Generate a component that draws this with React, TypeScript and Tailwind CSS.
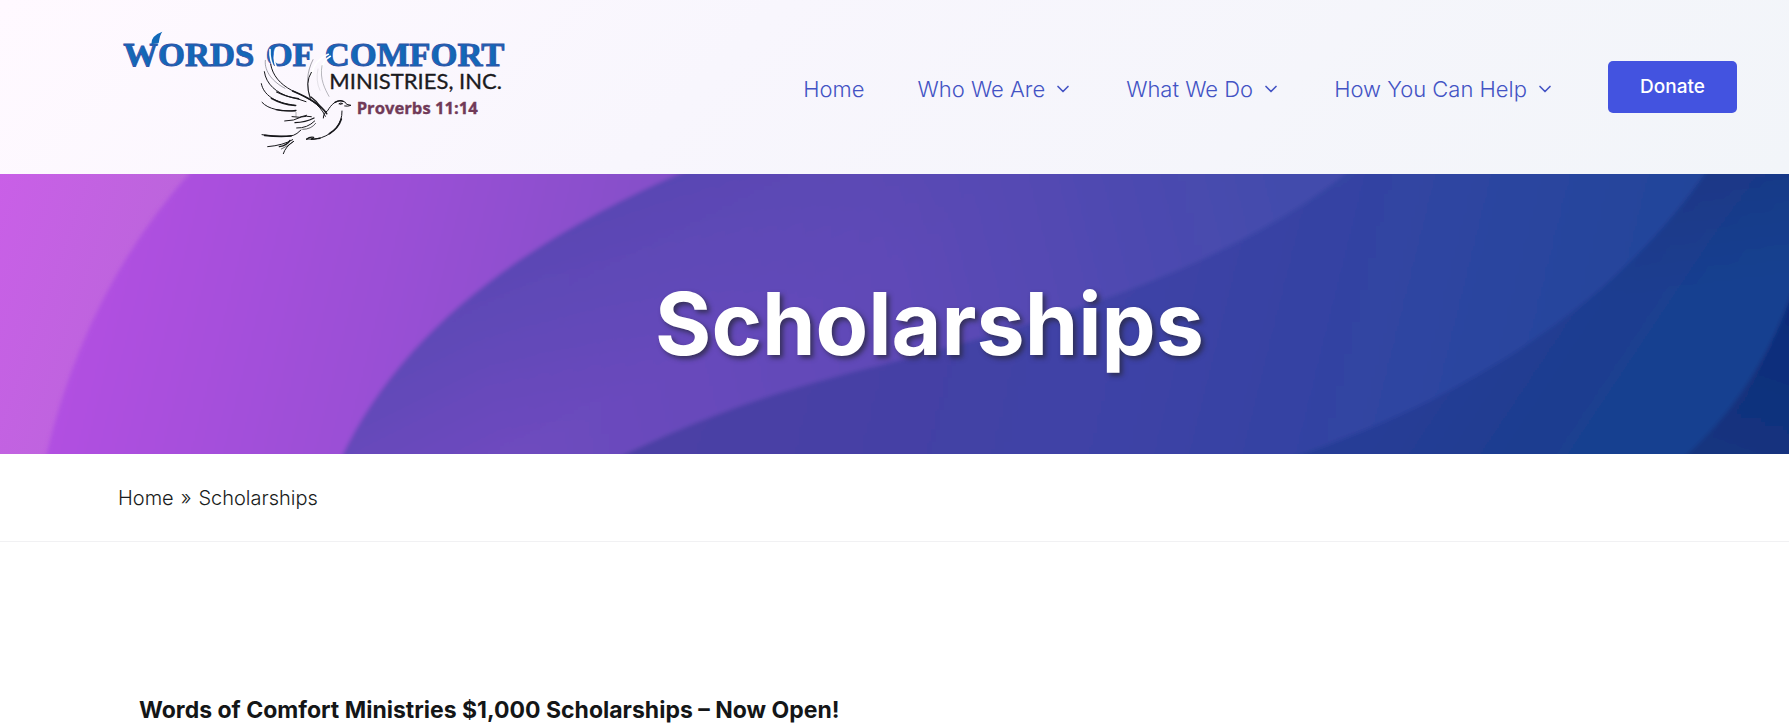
import { ChevronDown } from "lucide-react";

function Logo() {
  return (
    <svg viewBox="0 0 1230 435" className="h-[145px] w-[410px]" role="img" aria-label="Words of Comfort Ministries, Inc.">
      <g
        fontFamily="Liberation Serif, serif"
        fontWeight="700"
        fontSize="104"
        fill="#1169b8"
        stroke="#3154a8"
        strokeWidth="3"
      >
        <text x="40" y="140">WORDS</text>
        <text x="467" y="140">OF</text>
        <text x="644" y="140">COMFORT</text>
      </g>
      <path d="M124 76 Q122 50 157 38 Q150 46 146 72Z" fill="#1169b8" />
      <text x="658" y="209" fontFamily="Lato, sans-serif" fontSize="66" fill="#1b1b1f" stroke="#1b1b1f" strokeWidth="1">MINISTRIES, INC.</text>
      <text x="740" y="284" fontFamily="Open Sans, sans-serif" fontWeight="700" fontSize="50" fill="#713a58" stroke="#713a58" strokeWidth="1">Proverbs 11:14</text>
      <g fill="none" stroke="#fff" strokeLinecap="round" strokeWidth="5">
        <path d="M480 92 Q478 125 494 150" />
        <path d="M500 90 Q486 116 500 148" />
        <path d="M655 106 Q612 124 604 168" />
        <path d="M661 112 Q635 126 632 162" />
      </g>
      <g fill="none" stroke="#17171b" strokeLinecap="round" strokeLinejoin="round">
        <path d="M482 136 C488 170 510 195 545 214 C595 238 628 252 646 292" strokeWidth="3" />
        <path d="M548 216 C596 236 634 258 650 284" strokeWidth="5" />
        <path d="M466 124 C462 158 490 190 525 208" strokeWidth="2" stroke="#777780" />
        <path d="M463 158 C468 196 500 222 540 234 Q570 241 588 248" strokeWidth="3" />
        <path d="M500 219 Q530 234 566 239" strokeWidth="4" />
        <path d="M454 194 C460 226 492 252 558 259" strokeWidth="3" />
        <path d="M484 238 Q515 256 556 260" strokeWidth="4" />
        <path d="M456 250 C476 272 512 276 556 276" strokeWidth="3" />
        <path d="M498 272 Q528 278 558 274" strokeWidth="4" />
        <path d="M558 280 V293" strokeWidth="1" />
        <path d="M524 306 Q552 306 574 294 Q590 290 604 293" strokeWidth="3" />
        <path d="M546 293 Q568 299 590 289" strokeWidth="3" />
        <path d="M555 311 Q586 310 612 297" strokeWidth="4" />
        <path d="M560 327 Q592 328 614 306" strokeWidth="3" />
        <path d="M578 331 Q604 331 617 313" strokeWidth="2" />
        <path d="M609 122 C590 158 588 200 600 238" strokeWidth="2" stroke="#77777f" />
        <path d="M604 160 Q584 190 601 238" strokeWidth="3" />
        <path d="M636 140 C628 180 646 212 657 232" strokeWidth="2" stroke="#92929a" />
        <path d="M624 150 Q616 185 630 214" strokeWidth="1" stroke="#b2b2ba" />
        <path d="M603 234 Q622 248 632 264" strokeWidth="4" />
        <path d="M640 297 Q640 282 653 275 C664 256 678 243 696 246 Q708 248 710 256 L723 259 Q713 263 704 261" strokeWidth="3" />
        <path d="M675 250 Q688 242 700 247" strokeWidth="4" />
        <path d="M687 254 Q693 250 698 254 L690 256" strokeWidth="3" />
        <path d="M696 276 C697 315 672 343 634 356 Q614 363 590 360" strokeWidth="3" />
        <path d="M694 300 Q685 328 658 344" strokeWidth="5" />
        <path d="M590 361 Q598 353 611 355 L604 361 L630 358" strokeWidth="4" />
        <path d="M456 347 Q515 357 550 349 Q560 346 573 333" strokeWidth="3" />
        <path d="M464 349 Q505 354 543 351" strokeWidth="5" />
        <path d="M473 383 Q520 379 548 362" strokeWidth="3" />
        <path d="M508 383 Q532 379 540 364" strokeWidth="4" />
        <path d="M520 404 Q526 383 551 367" strokeWidth="3" />
        <path d="M514 390 Q536 380 548 369" strokeWidth="2" />
      </g>
    </svg>
  );
}

function BannerArt() {
  return (
    <svg
      viewBox="0 0 1789 280"
      preserveAspectRatio="none"
      className="absolute inset-0 h-full w-full"
      aria-hidden="true"
    >
      <defs>
        <linearGradient id="g1" gradientUnits="userSpaceOnUse" x1="0" y1="0" x2="170" y2="60">
          <stop offset="0" stopColor="#c95fe7" />
          <stop offset="1" stopColor="#bc65dc" />
        </linearGradient>
        <linearGradient id="g2" gradientUnits="userSpaceOnUse" x1="90" y1="130" x2="620" y2="260">
          <stop offset="0" stopColor="#b150e1" />
          <stop offset="0.5" stopColor="#9b50d6" />
          <stop offset="1" stopColor="#8350c8" />
        </linearGradient>
        <linearGradient id="g3" gradientUnits="userSpaceOnUse" x1="500" y1="260" x2="1300" y2="60">
          <stop offset="0" stopColor="#6f4bbf" />
          <stop offset="0.5" stopColor="#5f4ab7" />
          <stop offset="1" stopColor="#424bac" />
        </linearGradient>
        <linearGradient id="g3b" gradientUnits="userSpaceOnUse" x1="560" y1="60" x2="640" y2="220">
          <stop offset="0" stopColor="#5646b2" stopOpacity="0.8" />
          <stop offset="1" stopColor="#5646b2" stopOpacity="0" />
        </linearGradient>
        <linearGradient id="g4" gradientUnits="userSpaceOnUse" x1="720" y1="140" x2="1610" y2="360">
          <stop offset="0" stopColor="#4b40a5" />
          <stop offset="0.45" stopColor="#3e43a6" />
          <stop offset="0.75" stopColor="#2e44a1" />
          <stop offset="1" stopColor="#22449a" />
        </linearGradient>
        <linearGradient id="g5" gradientUnits="userSpaceOnUse" x1="1360" y1="280" x2="1540" y2="400">
          <stop offset="0" stopColor="#283d96" />
          <stop offset="0.6" stopColor="#1d3d90" />
          <stop offset="1" stopColor="#164190" />
        </linearGradient>
        <linearGradient id="g5b" gradientUnits="userSpaceOnUse" x1="1720" y1="0" x2="1735" y2="110">
          <stop offset="0" stopColor="#1a3785" stopOpacity="0.8" />
          <stop offset="1" stopColor="#1a3785" stopOpacity="0" />
        </linearGradient>
        <linearGradient id="g6" gradientUnits="userSpaceOnUse" x1="1789" y1="140" x2="1740" y2="280">
          <stop offset="0" stopColor="#112c7a" />
          <stop offset="1" stopColor="#12347f" />
        </linearGradient>
        <filter id="soft" x="-5%" y="-5%" width="110%" height="110%">
          <feGaussianBlur stdDeviation="2" />
        </filter>
      </defs>
      <rect width="1789" height="280" fill="url(#g1)" />
      <g filter="url(#soft)">
        <path d="M207 -20 Q82 110 42 300 H1820 V-20Z" fill="url(#g2)" />
        <path d="M725 -20 C530 60 395 155 334 300 H1820 V-20Z" fill="url(#g3)" />
        <path d="M725 -20 C530 60 395 155 334 300 H1820 V-20Z" fill="url(#g3b)" />
        <path d="M585 300 C740 220 835 204 930 178 C1110 130 1260 75 1370 -20 H1820 V300Z" fill="url(#g4)" />
        <path d="M1240 300 C1470 232 1630 120 1718 -20 H1820 V300Z" fill="url(#g5)" />
        <path d="M1240 300 C1470 232 1630 120 1718 -20 H1820 V300Z" fill="url(#g5b)" />
        <path d="M1664 300 Q1755 230 1795 110 H1820 V300Z" fill="url(#g6)" />
      </g>
    </svg>
  );
}

const navItems = [
  { label: "Home", menu: false },
  { label: "Who We Are", menu: true },
  { label: "What We Do", menu: true },
  { label: "How You Can Help", menu: true },
];

export default function App() {
  return (
    <div className="bg-white font-['Inter',sans-serif] text-[#191c20]">
      <header className="flex h-[174px] items-center justify-between bg-linear-[135deg,#fff9ff_0%,#f8f6fd_40%,#f2f5f9_100%] pr-[52px] pl-[110px]">
        <a href="#" className="mt-2 shrink-0">
          <Logo />
        </a>
        <nav className="flex items-center gap-[53px]">
          {navItems.map((item) => (
            <a
              key={item.label}
              href="#"
              className="flex items-center gap-2 pt-1 text-[22px] leading-8 font-light whitespace-nowrap text-[#4353c4]"
            >
              {item.label}
              {item.menu && <ChevronDown className="h-5 w-5" strokeWidth={2} />}
            </a>
          ))}
          <a
            href="#"
            className="flex h-[52px] w-[129px] items-center justify-center rounded-[5px] bg-[#4353e0] text-[19px] font-medium text-white"
          >
            Donate
          </a>
        </nav>
      </header>

      <section className="relative flex h-[280px] items-center justify-center overflow-hidden bg-[#5b48b5]">
        <BannerArt />
        <h1 className="relative pt-5 pl-[70px] text-[86px] leading-none font-bold text-white [text-shadow:3px_3px_5px_rgba(40,40,60,0.75)]">
          Scholarships
        </h1>
      </section>

      <nav
        aria-label="Breadcrumb"
        className="flex h-[88px] items-center gap-[7px] border-b border-[#f1f1f3] px-[118px] text-[20px] font-light"
      >
        <a href="#">Home</a>
        <span>»</span>
        <span>Scholarships</span>
      </nav>

      <main className="px-[139px] pt-[152px]">
        <h2 className="text-[23px] leading-8 font-bold text-[#141617]">
          Words of Comfort Ministries $1,000 Scholarships – Now Open!
        </h2>
      </main>
    </div>
  );
}
